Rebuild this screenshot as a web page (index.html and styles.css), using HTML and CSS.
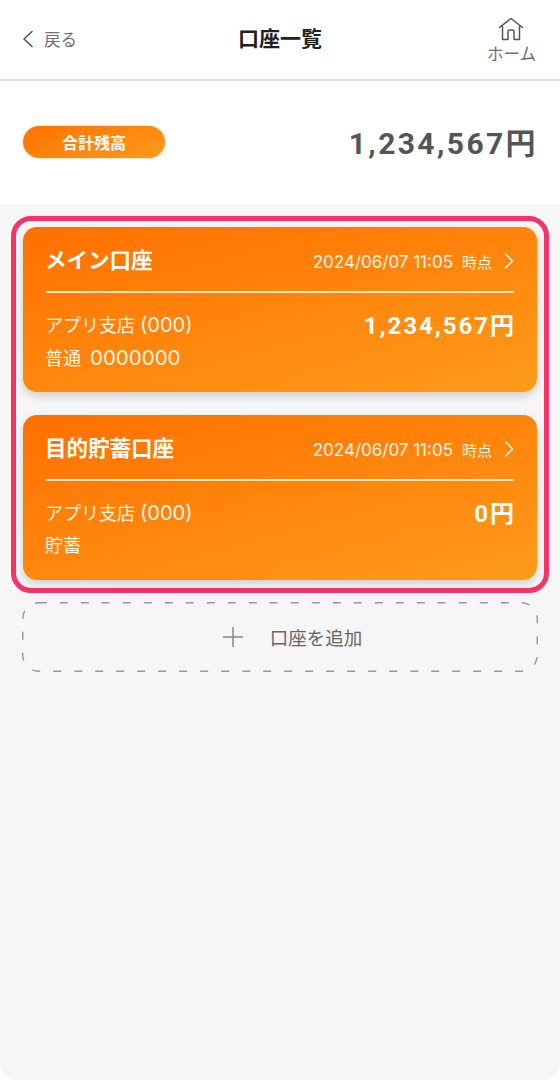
FILE: index.html
```html
<!DOCTYPE html>
<html lang="ja">
<head>
<meta charset="utf-8">
<title>口座一覧</title>
<link rel="stylesheet" href="styles.css">
</head>
<body>
<div class="screen">
  <header class="topbar">
    <a class="back">
      <svg class="back-icon" viewBox="0 0 12 18" width="12" height="18"><path d="M10 1.500 2 9l8 7.500" fill="none" stroke="#555" stroke-width="1.600" stroke-linecap="round" stroke-linejoin="round"/></svg>
      <span>戻る</span>
    </a>
    <h1 class="title">口座一覧</h1>
    <a class="home">
      <svg viewBox="0 0 26 24" width="26" height="24"><path d="M1.500 10.500 13 1.500l11.500 9M4.500 9v13.500h5.500v-8a1.500 1.500 0 0 1 1.500-1.500h3a1.500 1.500 0 0 1 1.500 1.500v8h5.500V9" fill="none" stroke="#555" stroke-width="1.500" stroke-linecap="round" stroke-linejoin="round"/></svg>
      <span>ホーム</span>
    </a>
  </header>
  <section class="summary">
    <span class="pill">合計残高</span>
    <span class="total">1,234,567円</span>
  </section>
  <main class="content">
    <div class="frame">
      <article class="card">
        <div class="card-head">
          <span class="name">メイン口座</span>
          <span class="stamp">2024/06/07 11:05<span class="at">時点</span></span>
          <svg class="chev" viewBox="0 0 10 16" width="10" height="16"><path d="M1.500 1 8.500 8l-7 7" fill="none" stroke="#fff" stroke-width="1.500" stroke-linecap="round" stroke-linejoin="round"/></svg>
        </div>
        <div class="card-body">
          <div class="info">
            <div>アプリ支店 <span class="code">(000)</span></div>
            <div>普通<span class="num">0000000</span></div>
          </div>
          <div class="amount">1,234,567円</div>
        </div>
      </article>
      <article class="card">
        <div class="card-head">
          <span class="name">目的貯蓄口座</span>
          <span class="stamp">2024/06/07 11:05<span class="at">時点</span></span>
          <svg class="chev" viewBox="0 0 10 16" width="10" height="16"><path d="M1.500 1 8.500 8l-7 7" fill="none" stroke="#fff" stroke-width="1.500" stroke-linecap="round" stroke-linejoin="round"/></svg>
        </div>
        <div class="card-body">
          <div class="info">
            <div>アプリ支店 <span class="code">(000)</span></div>
            <div>貯蓄</div>
          </div>
          <div class="amount">0円</div>
        </div>
      </article>
    </div>
    <button class="add">
      <svg class="add-border" viewBox="0 0 516 70" width="516" height="70"><rect x="0.750" y="0.750" width="514.500" height="68.500" rx="16" fill="none" stroke="#999" stroke-width="1.500" stroke-dasharray="8 13"/></svg>
      <svg viewBox="0 0 22 22" width="22" height="22"><path d="M11 1v20M1 11h20" fill="none" stroke="#888" stroke-width="1.500"/></svg>
      <span>口座を追加</span>
    </button>
  </main>
</div>
</body>
</html>
```

FILE: styles.css
```css
* { box-sizing: border-box; }
html, body { margin: 0; padding: 0; background: #fff; }
body {
  font-family: Inter, "Noto Sans CJK JP", sans-serif;
  color: #555;
}
.screen {
  width: 560px;
  height: 1080px;
  display: flex;
  flex-direction: column;
  overflow: hidden;
  border-radius: 0 0 16px 16px;
  background: #f6f6f6;
}
.topbar {
  height: 81px;
  flex: none;
  background: #fff;
  border-bottom: 2px solid #dedede;
  display: flex;
  align-items: center;
  justify-content: space-between;
  padding: 0 24px 2px 22px;
  position: relative;
}
.back {
  display: flex;
  align-items: center;
  gap: 10px;
  font-size: 16.500px;
  color: #707070;
}
.title {
  position: absolute;
  left: 0;
  right: 0;
  top: 24px;
  margin: 0;
  text-align: center;
  font-size: 21px;
  line-height: 30px;
  font-weight: 700;
  color: #222;
}
.home {
  display: flex;
  flex-direction: column;
  align-items: center;
  gap: 2px;
  font-size: 16.500px;
  line-height: 22px;
  color: #707070;
  margin-top: 4px;
}
.summary {
  height: 123px;
  flex: none;
  background: #fff;
  display: flex;
  align-items: center;
  justify-content: space-between;
  padding: 0 24px 0 23px;
}
.pill {
  width: 142px;
  height: 32px;
  border-radius: 16px;
  background: linear-gradient(160deg, #ff7300, #ff9a1a);
  color: #fff;
  font-size: 16px;
  font-weight: 700;
  display: flex;
  align-items: center;
  justify-content: center;
  box-shadow: 0 0 0 1px rgba(255, 190, 90, .35);
  margin-bottom: 1px;
}
.total {
  font-family: Roboto, "Noto Sans CJK JP", sans-serif;
  font-size: 30px;
  font-weight: 700;
  letter-spacing: 2.400px;
  color: #555;
  margin: 0 -2px 4px 0;
}
.content {
  flex: 1;
  padding: 12px 11px 0;
  display: flex;
  flex-direction: column;
}
.frame {
  border: 5px solid #f43369;
  border-radius: 20px;
  padding: 6px 7px 8px;
  display: flex;
  flex-direction: column;
  gap: 23px;
}
.card {
  height: 165px;
  border-radius: 14px;
  padding: 0 23px;
  background: linear-gradient(165deg, #ff7000, #ff9b1a);
  box-shadow: 0 4px 8px rgba(0, 0, 0, .16);
  color: #fff;
}
.card-head {
  height: 66px;
  display: flex;
  align-items: center;
  border-bottom: 2px solid #ffe9c4;
  padding-top: 4px;
}
.name {
  font-size: 21.500px;
  font-weight: 700;
  flex: 1;
  margin: 0 0 5px -1px;
}
.stamp {
  font-size: 17px;
  color: #fff6e8;
}
.at {
  font-size: 15px;
  margin-left: 9px;
}
.chev {
  margin-left: 12px;
}
.card-body {
  display: flex;
  justify-content: space-between;
  align-items: flex-start;
  padding-top: 16px;
}
.info {
  font-size: 18px;
  line-height: 32px;
  margin-left: -1px;
  color: #fff6e8;
}
.code {
  font-size: 20px;
}
.num {
  margin-left: 9px;
  font-size: 20.500px;
}
.amount {
  font-family: Roboto, "Noto Sans CJK JP", sans-serif;
  font-size: 24px;
  line-height: 36px;
  font-weight: 700;
  letter-spacing: 2px;
  margin: -1px -2px 0 0;
}
.add {
  position: relative;
  margin: 9px 0 0 0;
  width: 516px;
  height: 70px;
  padding: 0 0 1px 24px;
  border: 0;
  background: none;
  font: inherit;
  font-size: 18.500px;
  color: #666;
  display: flex;
  align-items: center;
  justify-content: center;
  gap: 26px;
  left: 11px;
}
.add-border {
  position: absolute;
  left: 0;
  top: 0;
}
```
